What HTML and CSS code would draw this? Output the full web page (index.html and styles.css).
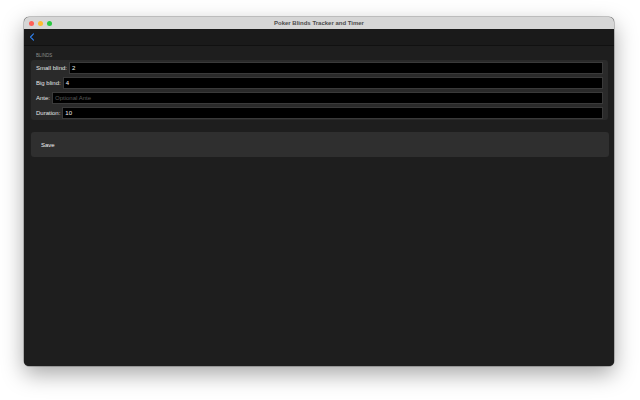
FILE: index.html
```html
<!DOCTYPE html>
<html>
<head>
<meta charset="utf-8">
<link rel="stylesheet" href="styles.css">
</head>
<body>
<div class="window">
  <div class="titlebar">
    <div class="lights">
      <span class="light red"></span>
      <span class="light yellow"></span>
      <span class="light green"></span>
    </div>
    <div class="title">Poker Blinds Tracker and Timer</div>
  </div>
  <div class="toolbar">
    <svg class="back" width="6" height="8" viewBox="0 0 6 8"><path d="M4.5 0.8 L1.5 4 L4.5 7.2" fill="none" stroke="#2f80ed" stroke-width="1.1" stroke-linecap="round" stroke-linejoin="round"/></svg>
  </div>
  <div class="content">
    <div class="section-label">BLINDS</div>
    <div class="group">
      <div class="row"><span class="label">Small blind:</span><div class="field">2</div></div>
      <div class="row"><span class="label">Big blind:</span><div class="field">4</div></div>
      <div class="row"><span class="label">Ante:</span><div class="field placeholder">Optional Ante</div></div>
      <div class="row"><span class="label">Duration:</span><div class="field">10</div></div>
    </div>
    <div class="save">Save</div>
  </div>
</div>
</body>
</html>
```

FILE: styles.css
```css
* { box-sizing: border-box; }
html, body { margin: 0; padding: 0; background: #ffffff; }
body {
  font-family: "Liberation Sans", Arial, sans-serif;
  width: 640px;
  height: 400px;
  overflow: hidden;
}
.window {
  margin: 17px 0 0 24px;
  width: 590px;
  height: 349px;
  background: #1e1e1e;
  border-radius: 5px;
  overflow: hidden;
  box-shadow: 0 8px 22px rgba(0, 0, 0, 0.35), 0 0 0 0.5px rgba(0, 0, 0, 0.4);
  display: flex;
  flex-direction: column;
}
.titlebar {
  height: 12px;
  background: #d6d6d6;
  position: relative;
  display: flex;
  align-items: center;
  justify-content: center;
}
.lights {
  position: absolute;
  left: 5px;
  top: 3.5px;
  display: flex;
  gap: 4px;
}
.light {
  width: 5px;
  height: 5px;
  border-radius: 50%;
}
.red { background: #fe5f57; }
.yellow { background: #febc2e; }
.green { background: #28c840; }
.title {
  font-size: 6px;
  font-weight: bold;
  color: #4b4b4b;
}
.toolbar {
  height: 17px;
  background: #1a1a1a;
  border-bottom: 1px solid #111111;
  display: flex;
  align-items: center;
  padding-left: 5px;
}
.back { display: block; }
.content {
  flex: 1;
  background: #1e1e1e;
  padding: 6px 6px 0 7px;
}
.section-label {
  font-size: 4.5px;
  color: #8c8c8c;
  padding-left: 5px;
  height: 8px;
  line-height: 8px;
}
.group {
  background: #2a2a2a;
  border-radius: 3px;
  padding: 0 5px;
  display: flex;
  flex-direction: column;
}
.row {
  height: 15px;
  display: flex;
  align-items: center;
  gap: 2px;
}
.label {
  font-size: 6px;
  color: #e6e6e6;
  white-space: nowrap;
}
.field {
  flex: 1;
  height: 12px;
  background: #000000;
  border: 1px solid #3a3a3a;
  font-size: 6px;
  color: #f0f0f0;
  line-height: 10px;
  padding-left: 2px;
}
.field.placeholder { color: #5a5a5a; }
.save {
  margin-top: 12px;
  height: 25px;
  margin-right: -1px;
  background: #2f2f2f;
  border-radius: 3px;
  font-size: 6px;
  color: #f2f2f2;
  padding-left: 10px;
  display: flex;
  align-items: center;
}
```
